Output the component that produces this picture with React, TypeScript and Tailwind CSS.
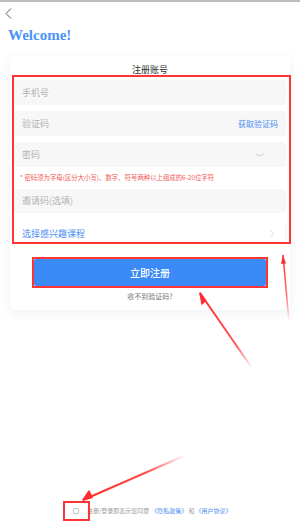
import React from 'react'

const cjk = '"Noto Sans CJK SC", "Noto Sans", sans-serif'

// red annotation arrows drawn over the page
function Arrows() {
  return (
    <svg className="absolute inset-0 pointer-events-none" width="300" height="530" viewBox="0 0 300 530">
      <defs>
        <linearGradient id="fadeA" x1="200" y1="293" x2="252" y2="368" gradientUnits="userSpaceOnUse">
          <stop offset="0" stopColor="#ff2d2d" />
          <stop offset="0.7" stopColor="#ff2d2d" stopOpacity="0.8" />
          <stop offset="1" stopColor="#ff2d2d" stopOpacity="0" />
        </linearGradient>
        <linearGradient id="fadeB" x1="283" y1="255" x2="289" y2="322" gradientUnits="userSpaceOnUse">
          <stop offset="0" stopColor="#ff2d2d" />
          <stop offset="0.6" stopColor="#ff2d2d" stopOpacity="0.7" />
          <stop offset="1" stopColor="#ff2d2d" stopOpacity="0" />
        </linearGradient>
        <linearGradient id="fadeC" x1="83" y1="500" x2="186" y2="455" gradientUnits="userSpaceOnUse">
          <stop offset="0" stopColor="#ff2d2d" />
          <stop offset="0.6" stopColor="#ff2d2d" stopOpacity="0.85" />
          <stop offset="1" stopColor="#ff2d2d" stopOpacity="0" />
        </linearGradient>
      </defs>
      <path d="M200 293 L252 368" stroke="url(#fadeA)" strokeWidth="2" />
      <path d="M200 293 L202 304 L205.5 300.5 Z" fill="#ff2d2d" stroke="#ff2d2d" strokeWidth="1.5" strokeLinejoin="round" />
      <path d="M283 255 L289 322" stroke="url(#fadeB)" strokeWidth="1.5" />
      <path d="M283 255 L281 264 L286 263.5 Z" fill="#ff2d2d" />
      <path d="M83 500 L186 455" stroke="url(#fadeC)" strokeWidth="2" />
      <path d="M83 500 L89 491 L92 497.5 Z" fill="#ff2d2d" stroke="#ff2d2d" strokeWidth="1.5" strokeLinejoin="round" />
    </svg>
  )
}

export default function App() {
  return (
    <div className="relative w-[300px] h-[530px] bg-white overflow-hidden flex flex-col" style={{ fontFamily: cjk }}>
      <div className="h-[2px] bg-[#bdbdbd]" />

      {/* Back */}
      <div className="h-[20px] pl-[5px] pt-[6px]">
        <svg width="7" height="11" viewBox="0 0 7 11" fill="none">
          <path d="M6 0.5 L1 5.5 L6 10.5" stroke="#555" strokeWidth="1" />
        </svg>
      </div>

      <div
        className="mt-[4px] pl-[8px] text-[15px] leading-[18px] font-bold text-[#4b93f5]"
        style={{ fontFamily: '"Liberation Serif", serif' }}
      >
        Welcome!
      </div>

      {/* Card */}
      <div className="mt-[12px] mx-[10px] rounded-[6px] bg-white shadow-[0_3px_12px_rgba(40,60,110,0.08)] px-[4px] pt-[8px] pb-[9px]">
        <div className="text-center text-[9px] leading-[12px] text-[#333]">注册账号</div>

        <div className="mt-[4px] h-[25px] rounded-[3px] bg-[#f7f7f7] flex items-center pl-[8px] text-[9px] text-[#b3b3b3]">
          手机号
        </div>
        <div className="mt-[6px] h-[25px] rounded-[3px] bg-[#f7f7f7] flex items-center justify-between pl-[8px] pr-[8px] text-[9px]">
          <span className="text-[#b3b3b3]">验证码</span>
          <span className="text-[8px] text-[#4a8ef0]">获取验证码</span>
        </div>
        <div className="mt-[6px] h-[25px] rounded-[3px] bg-[#f7f7f7] flex items-center justify-between pl-[8px] pr-[22px] text-[9px]">
          <span className="text-[#b3b3b3]">密码</span>
          <svg width="9" height="4" viewBox="0 0 9 4" fill="none">
            <path d="M0.5 0.8 Q4.5 4.5 8.5 0.8" stroke="#c8c8c8" strokeWidth="0.9" />
          </svg>
        </div>
        <div className="h-[22px] flex items-center pl-[6px] text-[6.4px] leading-[8px] text-[#f25a5a] whitespace-nowrap">
          * 密码须为字母(区分大小写)、数字、符号两种以上组成的6-20位字符
        </div>
        <div className="h-[24px] rounded-[3px] bg-[#f7f7f7] flex items-center pl-[8px] text-[9px] text-[#b3b3b3]">
          邀请码(选填)
        </div>
        <div className="mt-[11px] h-[20px] flex items-center justify-between pl-[8px] pr-[10px] border-r border-[#eef0f3] text-[9px] text-[#4a8ef0]">
          <span>选择感兴趣课程</span>
          <svg width="5" height="8" viewBox="0 0 5 8" fill="none">
            <path d="M0.6 0.6 L4 4 L0.6 7.4" stroke="#d5dcec" strokeWidth="0.9" />
          </svg>
        </div>

        <div className="mt-[15px] mx-[20px] h-[27px] rounded-[2px] bg-[#3a8af7] flex items-center justify-center text-[10px] font-medium text-white">
          立即注册
        </div>
        <div className="mt-[5px] text-center text-[7px] leading-[10px] text-[#777]">收不到验证码?</div>
      </div>

      {/* Agreement */}
      <div className="mt-auto pb-[14px] flex items-center pl-[73px] h-[24px] text-[6px] leading-[10px] text-[#999] whitespace-nowrap">
        <span className="w-[6px] h-[6px] border border-[#c4c4c4] rounded-[1px]" />
        <span className="ml-[8px]">注册/登录即表示您同意</span>
        <span className="ml-[2px] text-[#4a8ef0]">《隐私政策》</span>
        <span className="mx-[1px]">和</span>
        <span className="text-[#4a8ef0]">《用户协议》</span>
      </div>

      {/* Annotation boxes */}
      <div className="absolute left-[12px] top-[75px] w-[279px] h-[169px] border-2 border-[#ff3434] pointer-events-none" />
      <div className="absolute left-[32px] top-[257px] w-[236px] h-[31px] border-2 border-[#ff3434] pointer-events-none" />
      <div className="absolute left-[63px] top-[501px] w-[27px] h-[20px] border-2 border-[#ff3434] pointer-events-none" />
      <Arrows />
    </div>
  )
}
